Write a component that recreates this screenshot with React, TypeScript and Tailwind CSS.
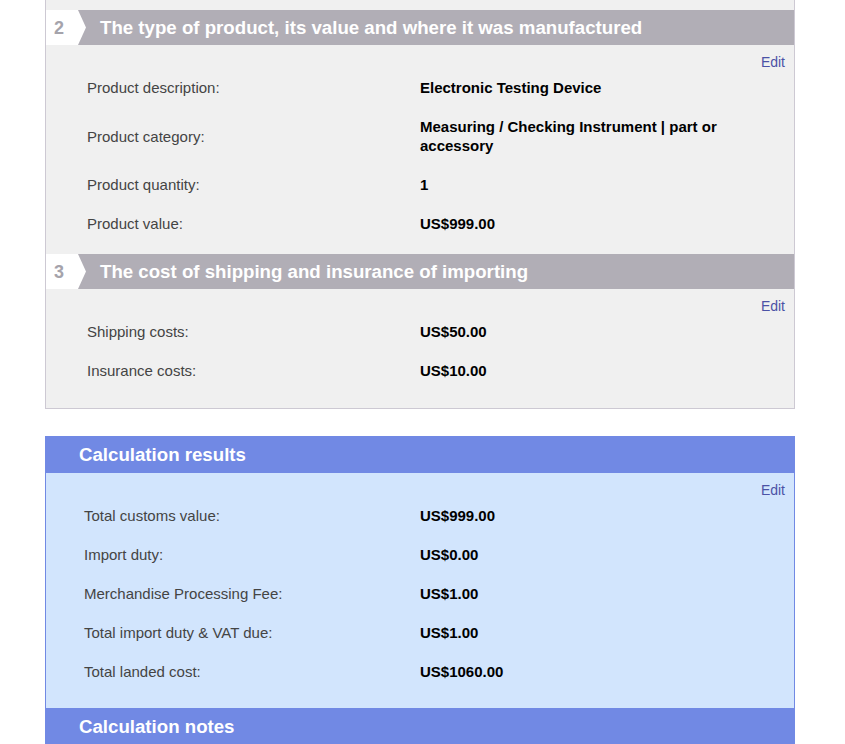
import React from "react";

const Row = ({ label, value, blue }: { label: string; value: string; blue?: boolean }) => (
  <div className={`flex items-center py-[10px] text-[15px] leading-[19px] ${blue ? "pl-[38px]" : "pl-[41px]"}`}>
    <div className={`shrink-0 text-[#444] ${blue ? "w-[336px]" : "w-[333px]"}`}>{label}</div>
    <div className="w-[340px] font-bold text-black">{value}</div>
  </div>
);

const EditLink = () => (
  <div className="mb-[-2px] flex justify-end pt-[9px] pr-[9px] text-[14px] leading-[16px]">
    <a className="cursor-pointer text-[#4b52a6]">Edit</a>
  </div>
);

const SectionHeader = ({ num, title }: { num: string; title: string }) => (
  <div className="flex h-[35px] items-stretch bg-[#b1aeb6]">
    <div className="flex w-[32px] items-center bg-white pt-[1px] pl-[8px] text-[18px] font-bold text-[#a5a3ab]">{num}</div>
    <svg width="8" height="35" viewBox="0 0 8 35" className="block shrink-0">
      <polygon points="0,0 8,17.5 0,35" fill="#ffffff" />
    </svg>
    <div className="ml-[14px] flex items-center pt-[1px] text-[18.67px] font-bold text-white">{title}</div>
  </div>
);

export default function App() {
  return (
    <div className="h-[744px] w-[845px] overflow-hidden bg-white font-['Liberation_Sans',Arial,sans-serif]">
      <div className="ml-[45px] w-[750px]">
        <div className="border-x border-b border-[#cdc9d3] bg-[#f0f0f0] pt-[10px] pb-[7px]">
          <SectionHeader num="2" title="The type of product, its value and where it was manufactured" />
          <div className="pb-[11px]">
            <EditLink />
            <Row label="Product description:" value="Electronic Testing Device" />
            <Row label="Product category:" value="Measuring / Checking Instrument | part or accessory" />
            <Row label="Product quantity:" value="1" />
            <Row label="Product value:" value="US$999.00" />
          </div>
          <SectionHeader num="3" title="The cost of shipping and insurance of importing" />
          <div className="pb-[11px]">
            <EditLink />
            <Row label="Shipping costs:" value="US$50.00" />
            <Row label="Insurance costs:" value="US$10.00" />
          </div>
        </div>

        <div className="mt-[27px] border-x border-[#7189e4] bg-[#d2e5fd]">
          <div className="flex h-[37px] items-center bg-[#7189e4] pl-[33px] text-[18.67px] font-bold text-white">
            Calculation results
          </div>
          <div className="pb-[17px]">
            <EditLink />
            <Row blue label="Total customs value:" value="US$999.00" />
            <Row blue label="Import duty:" value="US$0.00" />
            <Row blue label="Merchandise Processing Fee:" value="US$1.00" />
            <Row blue label="Total import duty & VAT due:" value="US$1.00" />
            <Row blue label="Total landed cost:" value="US$1060.00" />
          </div>
          <div className="flex h-[37px] items-center bg-[#7189e4] pl-[33px] text-[18.67px] font-bold text-white">
            Calculation notes
          </div>
          <div className="h-[40px]" />
        </div>
      </div>
    </div>
  );
}
